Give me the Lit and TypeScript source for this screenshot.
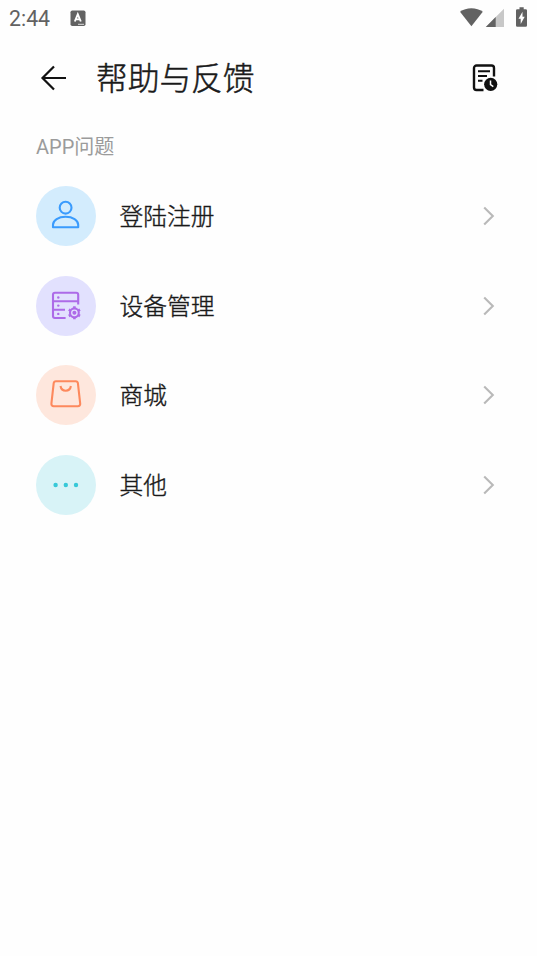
import { LitElement, html, css, svg, SVGTemplateResult } from 'lit'
import { customElement, property } from 'lit/decorators.js'

type IconName = 'user' | 'device' | 'shop' | 'more'

interface HelpItem {
    icon: IconName
    label: string
}

const ITEMS: HelpItem[] = [
    { icon: 'user', label: '登陆注册' },
    { icon: 'device', label: '设备管理' },
    { icon: 'shop', label: '商城' },
    { icon: 'more', label: '其他' },
]

const ICONS: Record<IconName, SVGTemplateResult> = {
    user: svg`
        <circle cx="29.6" cy="21.7" r="5.9" />
        <path d="M17 41.2v-2.4c0-4.6 5.4-8 12.6-8s12.6 3.4 12.6 8v2.4z" />
    `,
    device: svg`
        <path d="M29.6 42H19a2 2 0 0 1-2-2V18.8a2 2 0 0 1 2-2h21.2a2 2 0 0 1 2 2v9.7M17 25.3h25.2M17 33.7h12" />
        <g class="fill">
            <circle cx="22.3" cy="21.5" r="1.2" />
            <circle cx="22.3" cy="29.6" r="1.2" />
            <circle cx="22.3" cy="37.9" r="1.2" />
            <circle cx="38.4" cy="36.8" r="2" />
        </g>
        <circle cx="38.4" cy="36.8" r="4.4" />
        <path d="M38.4 32v-1.7M42.6 34.4l1.4-.8M42.6 39.2l1.4.8M38.4 41.6v1.7M34.2 39.200l-1.4.8M34.200 34.400l-1.4-.8" stroke-width="2.6" />
    `,
    shop: svg`
        <path d="M20 16.2h19.6a2.3 2.3 0 0 1 2.3 2l2.3 20.5a2.3 2.3 0 0 1-2.3 2.6H17.7a2.3 2.3 0 0 1-2.3-2.6l2.3-20.5a2.3 2.3 0 0 1 2.3-2z" />
        <path d="M24.5 21c.5 2.9 2.5 4.7 5.2 4.7s4.7-1.8 5.2-4.7" />
    `,
    more: svg`
        <g class="fill">
            <circle cx="19.6" cy="30" r="2.2" />
            <circle cx="29.8" cy="30" r="2.2" />
            <circle cx="40" cy="30" r="2.2" />
        </g>
    `,
}

@customElement('status-bar')
class StatusBar extends LitElement {
    static styles = css`
        :host {
            display: flex;
            align-items: center;
            height: 36px;
            padding: 0 9px;
            box-sizing: border-box;
            color: #626262;
        }

        .time {
            font: 21.3px/36px Roboto, sans-serif;
            width: 61px;
            padding-top: 1px;
        }

        .spacer {
            flex: 1;
        }

        svg {
            display: block;
            fill: currentColor;
        }
    `

    render() {
        return html`
            <span class="time">2:44</span>
            <svg width="16" height="36" viewBox="70 0 16 36">
                <rect x="70.5" y="10.5" width="15" height="15.5" rx="1.8" />
                <path d="M74.8 21.5l3-7.2 3 7.2M75.8 19.4h4" fill="none" stroke="#fff" stroke-width="1.9" />
                <path d="M78 24.3h6" stroke="#fff" stroke-width=".8" />
            </svg>
            <span class="spacer"></span>
            <svg width="69" height="36" viewBox="459 0 69 36">
                <path d="M471.4 26.3L460 11.8c6-4.9 16.8-4.9 22.8 0z" />
                <path d="M504 8.7v18.2h-18.2z" fill="#c8c8c8" />
                <path d="M495.7 17v9.9h-9.9z" />
                <path d="M519.5 7.3h4.2v1.9h2a1.3 1.3 0 0 1 1.3 1.3v15a1.3 1.3 0 0 1-1.3 1.3h-8.4a1.3 1.3 0 0 1-1.3-1.3v-15a1.3 1.3 0 0 1 1.3-1.3h2.2z" />
                <path d="M522.5 11.8v5h2.2l-4 7.3v-5.3h-2.2z" fill="#fff" />
            </svg>
        `
    }
}

@customElement('help-item')
class HelpItemRow extends LitElement {
    @property() icon: IconName = 'more'
    @property() label = ''

    static styles = css`
        :host {
            display: flex;
            align-items: center;
            height: 60px;
        }

        .badge {
            width: 60px;
            height: 60px;
            border-radius: 50%;
        }

        .badge svg {
            display: block;
            fill: none;
            stroke: currentColor;
            stroke-width: 2.1;
            stroke-linejoin: round;
        }

        .badge .fill {
            fill: currentColor;
            stroke: none;
        }

        .user { background: #d3ecfd; color: #3a9bfd; }
        .device { background: #e2e1fe; color: #ad6be8; }
        .shop { background: #fee7dd; color: #fd895d; }
        .more { background: #d8f3f7; color: #37c8d8; }

        .label {
            flex: 1;
            margin-left: 23.6px;
            padding-top: 2px;
            color: #1a1a1a;
            font-size: 23.7px;
            font-weight: 300;
            line-height: 36px;
            -webkit-text-stroke: 0.4px #1a1a1a;
        }

        .chevron {
            display: block;
            fill: none;
            stroke: #b9b9b9;
            stroke-width: 2.1;
        }
    `

    render() {
        return html`
            <div class="badge ${this.icon}">
                <svg width="60" height="60" viewBox="0 0 60 60">${ICONS[this.icon]}</svg>
            </div>
            <span class="label">${this.label}</span>
            <svg class="chevron" width="12" height="20" viewBox="0 0 12 20">
                <path d="M1.2 1.5L9.8 10l-8.6 8.5" />
            </svg>
        `
    }
}

@customElement('app-root')
class AppRoot extends LitElement {
    static styles = css`
        :host {
            display: block;
            min-height: 956px;
            background: #fefefe;
            font-family: Roboto, 'Noto Sans CJK SC', sans-serif;
        }

        header {
            display: flex;
            align-items: center;
            height: 84px;
            padding: 0 36px 0 40px;
        }

        header svg {
            display: block;
            fill: none;
            stroke: #111;
        }

        h1 {
            flex: 1;
            margin: 0 0 0 28px;
            padding-top: 3px;
            color: #1a1a1a;
            font-size: 31.7px;
            font-weight: 300;
            line-height: 48px;
            -webkit-text-stroke: 0.5px #1a1a1a;
        }

        .section {
            margin: 0;
            padding: 12px 36px 0;
            color: #9b9b9b;
            font-size: 20px;
            line-height: 30px;
        }

        .list {
            display: flex;
            flex-direction: column;
            gap: 29.7px;
            padding: 24px 42px 0 36px;
        }
    `

    render() {
        return html`
            <status-bar></status-bar>
            <header>
                <svg width="28" height="28" viewBox="0 0 28 28" stroke-width="2.2">
                    <path d="M14 2.5L2.5 14 14 25.5M2.5 14H26" />
                </svg>
                <h1>帮助与反馈</h1>
                <svg width="32" height="32" viewBox="0 0 32 32" stroke-width="2.4">
                    <path d="M14.5 28H7.500a2.500 2.500 0 0 1-2.500-2.500V6A2.500 2.500 0 0 1 7.500 3.500h15A2.500 2.500 0 0 1 25 6v8.500" />
                    <path d="M9 9.300h12M9 14h9M9 18.800h4.500" stroke-width="2" />
                    <circle cx="21.700" cy="22.300" r="6.600" fill="#111" stroke="none" />
                    <path d="M21.500 18.500v4.200l2.800 2" stroke="#fff" stroke-width="1.500" />
                </svg>
            </header>
            <p class="section">APP问题</p>
            <div class="list">
                ${ITEMS.map(item => html`
                    <help-item .icon=${item.icon} .label=${item.label}></help-item>
                `)}
            </div>
        `
    }
}
